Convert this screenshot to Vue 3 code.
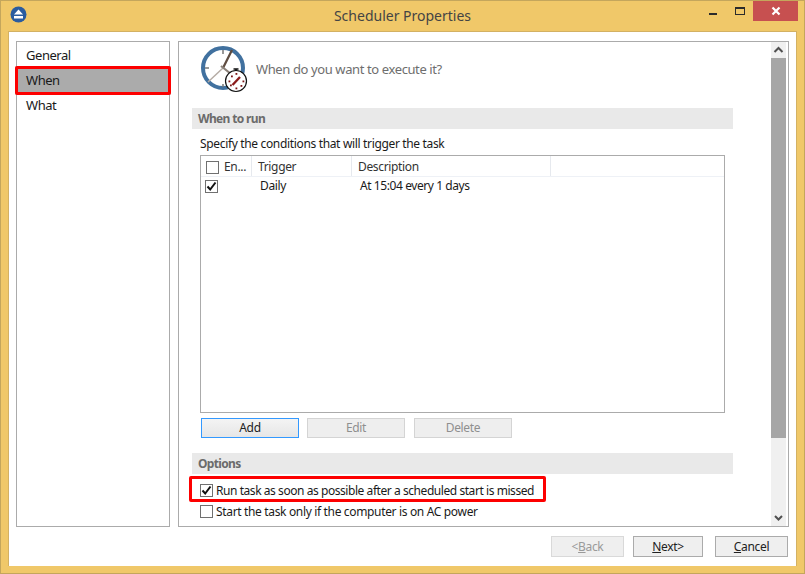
<template>
  <div class="window">
    <div class="titlebar">
      <svg class="app-icon" width="17" height="17" viewBox="0 0 17 17">
        <circle cx="8.5" cy="8.5" r="8" fill="#2a5c9f" />
        <path d="M8.5 3.5 L13 8.5 H4 Z" fill="#fff" />
        <rect x="4" y="10" width="9" height="2.5" fill="#fff" />
      </svg>
      <div class="title">Scheduler Properties</div>
      <div class="win-btns">
        <div class="win-btn min"><span class="min-bar"></span></div>
        <div class="win-btn max"><span class="max-box"></span></div>
        <div class="win-btn close">
          <svg width="10" height="10" viewBox="0 0 10 10">
            <path d="M1.5 1.5 L8.5 8.5 M8.5 1.5 L1.5 8.5" stroke="#fff" stroke-width="2.2" />
          </svg>
        </div>
      </div>
    </div>

    <div class="client">
      <div class="panels">
        <div class="nav">
          <div v-for="item in navItems" :key="item" class="nav-item" :class="{ active: item === 'When' }">{{ item }}</div>
        </div>

        <div class="main">
          <div class="content">
            <div class="heading">
              <svg class="clock" width="50" height="50" viewBox="0 0 50 50">
                <circle cx="23" cy="24" r="20" fill="#fff" stroke="#41719f" stroke-width="4" />
                <path d="M23 6v4M5 24h4M23 40v3" stroke="#777" stroke-width="1.5" />
                <path d="M23 24 L32 6" stroke="#5f4c40" stroke-width="2.2" />
                <path d="M23 24 L8 38" stroke="#b5aca5" stroke-width="1.5" />
                <path d="M21 22 L36 34" stroke="#8a8078" stroke-width="2.2" />
                <circle cx="36" cy="37" r="10.5" fill="#fff" stroke="#111" stroke-width="1.2" />
                <path d="M33.5 25h5M36 25v2" stroke="#111" stroke-width="1.6" />
                <path d="M32.5 41 L40 33" stroke="#8b1a1a" stroke-width="2.4" />
                <g fill="#7b1515">
                  <rect x="35.5" y="29" width="1.8" height="1.8" />
                  <rect x="35.5" y="43.5" width="1.8" height="1.8" />
                  <rect x="28.5" y="36.5" width="1.8" height="1.8" />
                  <rect x="42.5" y="36.5" width="1.8" height="1.8" />
                  <rect x="31" y="31.5" width="1.8" height="1.8" />
                  <rect x="40.5" y="41" width="1.8" height="1.8" />
                  <rect x="30" y="40.5" width="1.8" height="1.8" />
                </g>
              </svg>
              <span class="question">When do you want to execute it?</span>
            </div>

            <div class="section">When to run</div>
            <div class="hint">Specify the conditions that will trigger the task</div>

            <div class="table">
              <div class="thead">
                <div class="th c-en"><span class="check"></span><span class="en-label">En...</span></div>
                <div class="th c-trigger">Trigger</div>
                <div class="th c-desc">Description</div>
                <div class="th c-rest"></div>
              </div>
              <div v-for="row in rows" :key="row.trigger" class="tr">
                <div class="td c-en">
                  <span class="check">
                    <svg v-if="row.enabled" width="11" height="11" viewBox="0 0 11 11"><path d="M1.5 5.5 L4.2 8.5 L9.5 1.5" fill="none" stroke="#111" stroke-width="2" /></svg>
                  </span>
                </div>
                <div class="td c-trigger">{{ row.trigger }}</div>
                <div class="td c-desc">{{ row.description }}</div>
              </div>
            </div>

            <div class="table-btns">
              <button class="btn primary">Add</button>
              <button class="btn off">Edit</button>
              <button class="btn off">Delete</button>
            </div>

            <div class="section options">Options</div>

            <label class="opt marked">
              <span class="check">
                <svg width="11" height="11" viewBox="0 0 11 11"><path d="M1.5 5.5 L4.2 8.5 L9.5 1.5" fill="none" stroke="#111" stroke-width="2" /></svg>
              </span>
              <span>Run task as soon as possible after a scheduled start is missed</span>
            </label>
            <label class="opt plain">
              <span class="check"></span>
              <span>Start the task only if the computer is on AC power</span>
            </label>
          </div>

          <div class="scrollbar">
            <svg class="arrow" width="15" height="16" viewBox="0 0 15 16"><path d="M3.5 10 L7.5 6 L11.5 10" fill="none" stroke="#505050" stroke-width="2" /></svg>
            <div class="track"><div class="thumb"></div></div>
            <svg class="arrow" width="15" height="16" viewBox="0 0 15 16"><path d="M4 6 L7.5 9.5 L11 6" fill="none" stroke="#505050" stroke-width="2" /></svg>
          </div>
        </div>
      </div>

      <div class="footer">
        <button class="foot-btn off"><span>&lt;<u>B</u>ack</span></button>
        <button class="foot-btn next"><span><u>N</u>ext&gt;</span></button>
        <button class="foot-btn cancel"><span><u>C</u>ancel</span></button>
      </div>
    </div>
  </div>
</template>

<script setup>
const navItems = ['General', 'When', 'What'];
const rows = [
  { enabled: true, trigger: 'Daily', description: 'At 15:04 every 1 days' }
];
</script>

<style scoped>
.window {
  width: 805px;
  height: 574px;
  box-sizing: border-box;
  background: #f0c869;
  border: 1px solid #c4a65c;
  display: flex;
  flex-direction: column;
  font-family: "Noto Sans", sans-serif;
  font-size: 12px;
  letter-spacing: -0.34px;
  color: #1a1a1a;
  overflow: hidden;
}

.titlebar {
  height: 30px;
  flex: none;
  display: flex;
  position: relative;
}

.app-icon {
  margin: 5px 0 0 9px;
}

.title {
  position: absolute;
  left: 0;
  right: 0;
  top: 5px;
  text-align: center;
  font-size: 14px;
  line-height: 20px;
  letter-spacing: 0;
  color: #444;
}

.win-btns {
  margin-left: auto;
  margin-right: 6px;
  display: flex;
  height: 20px;
  position: relative;
}

.win-btn {
  display: flex;
  align-items: center;
  justify-content: center;
}

.min {
  width: 26px;
  margin-right: 1px;
}

.min-bar {
  width: 8px;
  height: 2px;
  margin-top: 6px;
  background: #2b2b2b;
}

.max {
  width: 26px;
}

.max-box {
  width: 8px;
  height: 5px;
  border: 1px solid #2b2b2b;
  border-top-width: 2px;
}

.close {
  width: 45px;
  background: #c75050;
}

.client {
  flex: 1;
  margin: 0 7px 7px;
  background: #fff;
  border: 1px solid #d3b163;
  border-bottom: none;
  padding: 9px 7px 0;
  display: flex;
  flex-direction: column;
}

.panels {
  display: flex;
  gap: 8px;
  height: 486px;
}

.nav {
  width: 154px;
  box-sizing: border-box;
  border: 1px solid #ababab;
  padding-top: 1px;
}

.nav-item {
  height: 25px;
  line-height: 25px;
  padding-left: 9px;
  font-size: 13px;
  letter-spacing: -0.45px;
}

.nav-item.active {
  background: #ababab;
  outline: 3px solid #fd0000;
  outline-offset: -3px;
  margin-left: -2px;
  margin-right: -2px;
  padding-left: 11px;
  height: 29px;
  line-height: 29px;
  margin-top: -2px;
  margin-bottom: -2px;
  border-radius: 2px;
  position: relative;
}

.main {
  width: 611px;
  box-sizing: border-box;
  border: 1px solid #ababab;
  display: flex;
}

.content {
  flex: 1;
  padding: 0 0 0 13px;
  min-width: 0;
}

.heading {
  height: 66px;
  display: flex;
  align-items: flex-start;
}

.clock {
  margin: 2px 0 0 8px;
}

.question {
  margin: 17px 0 0 6px;
  font-size: 13px;
  letter-spacing: -0.39px;
  color: #6e6e6e;
  line-height: 20px;
}

.section {
  width: 541px;
  height: 21px;
  line-height: 21px;
  background: #e9e9e9;
  padding-left: 6px;
  box-sizing: border-box;
  font-weight: 700;
  letter-spacing: -0.65px;
  color: #6b6b6b;
}

.hint {
  margin: 6px 0 0 8px;
  height: 20px;
  line-height: 18px;
}

.table {
  width: 525px;
  height: 258px;
  margin-left: 8px;
  box-sizing: border-box;
  border: 1px solid #ababab;
}

.thead {
  display: flex;
  height: 20px;
  border-bottom: 1px solid #eef1f6;
}

.th {
  border-right: 1px solid #e6e9ee;
  line-height: 20px;
  padding-top: 2px;
  display: flex;
  align-items: center;
  color: #333;
}

.tr {
  display: flex;
  height: 18px;
  line-height: 18px;
}

.td {
  display: flex;
  align-items: center;
  padding-left: 2px;
}

.c-en {
  width: 51px;
  padding-left: 4px;
  box-sizing: border-box;
}

.th.c-en {
  padding-left: 5px;
}

.en-label {
  margin-left: 5px;
}

.c-trigger {
  width: 100px;
  padding-left: 6px;
  box-sizing: border-box;
}

.c-desc {
  width: 199px;
  padding-left: 5px;
  box-sizing: border-box;
}

.th.c-desc {
  padding-left: 6px;
}

.td.c-trigger {
  padding-left: 8px;
}

.td.c-desc {
  padding-left: 8px;
  letter-spacing: -0.42px;
}

.c-rest {
  border-right: none;
}

.check {
  width: 13px;
  height: 13px;
  flex: none;
  box-sizing: border-box;
  border: 1px solid #707070;
  background: #fff;
  display: inline-flex;
  align-items: center;
  justify-content: center;
}

.table-btns {
  display: flex;
  margin: 5px 0 0 9px;
  gap: 8px;
}

.btn {
  width: 98px;
  height: 20px;
  padding: 0 0 2px;
  box-sizing: border-box;
  font: inherit;
  letter-spacing: inherit;
  background: #eaeaea;
  border: 1px solid #ababab;
  color: #222;
}

.btn.primary {
  border-color: #3399ff;
  background: linear-gradient(#f4f4f4, #e6e6e6);
}

.btn.off {
  color: #8f8f8f;
  border-color: #d4d4d4;
  background: #eeeeee;
}

.btn.off + .btn.off {
  margin-left: 1px;
}

.options {
  margin-top: 15px;
}

.opt {
  display: flex;
  align-items: center;
  gap: 3px;
  height: 20px;
  margin-left: 8px;
  white-space: nowrap;
}

.opt.marked {
  width: 357px;
  height: 26px;
  box-sizing: border-box;
  margin: 2px 0 0 -3px;
  border: 3px solid #fd0000;
  padding: 2px 0 0 8px;
  border-radius: 2px;
  letter-spacing: -0.44px;
}

.opt.plain {
  height: 19px;
}

.scrollbar {
  width: 15px;
  margin: 0 2px 0 0;
  background: #f0f0f0;
  display: flex;
  flex-direction: column;
}

.arrow {
  flex: none;
}

.track {
  flex: 1;
}

.thumb {
  height: 380px;
  background: #a6a6a6;
}

.footer {
  display: flex;
  justify-content: flex-end;
  margin-top: 9px;
  padding-right: 1px;
}

.foot-btn {
  height: 21px;
  padding: 0;
  box-sizing: border-box;
  font: inherit;
  letter-spacing: inherit;
  color: #222;
  background: #efefef;
  border: 1px solid #ababab;
}

.foot-btn.off {
  width: 73px;
  color: #9a9a9a;
  border-color: #d9d9d9;
  margin-right: 9px;
}

.next {
  width: 70px;
  margin-right: 12px;
}

.cancel {
  width: 73px;
}
</style>

<style>
body {
  margin: 0;
}
</style>
